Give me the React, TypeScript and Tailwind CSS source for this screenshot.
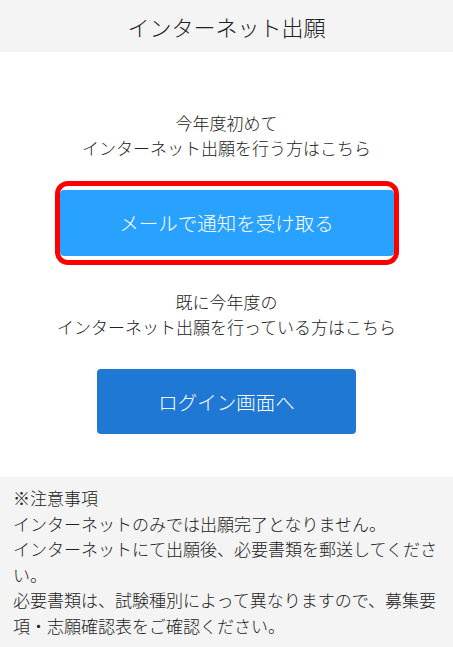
import React from 'react';

const font = { fontFamily: '"Noto Sans CJK JP", "Noto Sans", sans-serif' };

export default function App() {
  return (
    <div className="min-h-[647px] bg-white text-[#222] font-light" style={font}>
      <header className="h-[52px] bg-[#f4f4f4] flex items-center justify-center text-[22px] text-[#222]">
        インターネット出願
      </header>
      <main className="flex flex-col items-center pt-[58px] pb-[43px]">
        <p className="text-[17px] leading-[25px] text-center">
          今年度初めて
          <br />
          インターネット出願を行う方はこちら
        </p>
        <div className="mt-[21px] w-[344px] h-[84px] border-[5px] border-[#ff0000] rounded-[13px] py-[4px] bg-white">
          <button className="w-full h-full bg-[#28a1ff] rounded-[4px] text-white text-[19.5px] font-light">
            メールで通知を受け取る
          </button>
        </div>
        <p className="mt-[24px] text-[17px] leading-[25px] text-center">
          既に今年度の
          <br />
          インターネット出願を行っている方はこちら
        </p>
        <button className="mt-[30px] w-[259px] h-[65px] bg-[#1f78d4] rounded-[4px] text-white text-[19.5px] font-light">
          ログイン画面へ
        </button>
      </main>
      <section className="bg-[#f4f4f4] px-[13px] pt-[8px] pb-[12px] text-[17px] leading-[25.5px]">
        <p>※注意事項</p>
        <p>インターネットのみでは出願完了となりません。</p>
        <p>インターネットにて出願後、必要書類を郵送してください。</p>
        <p>必要書類は、試験種別によって異なりますので、募集要項・志願確認表をご確認ください。</p>
      </section>
    </div>
  );
}
